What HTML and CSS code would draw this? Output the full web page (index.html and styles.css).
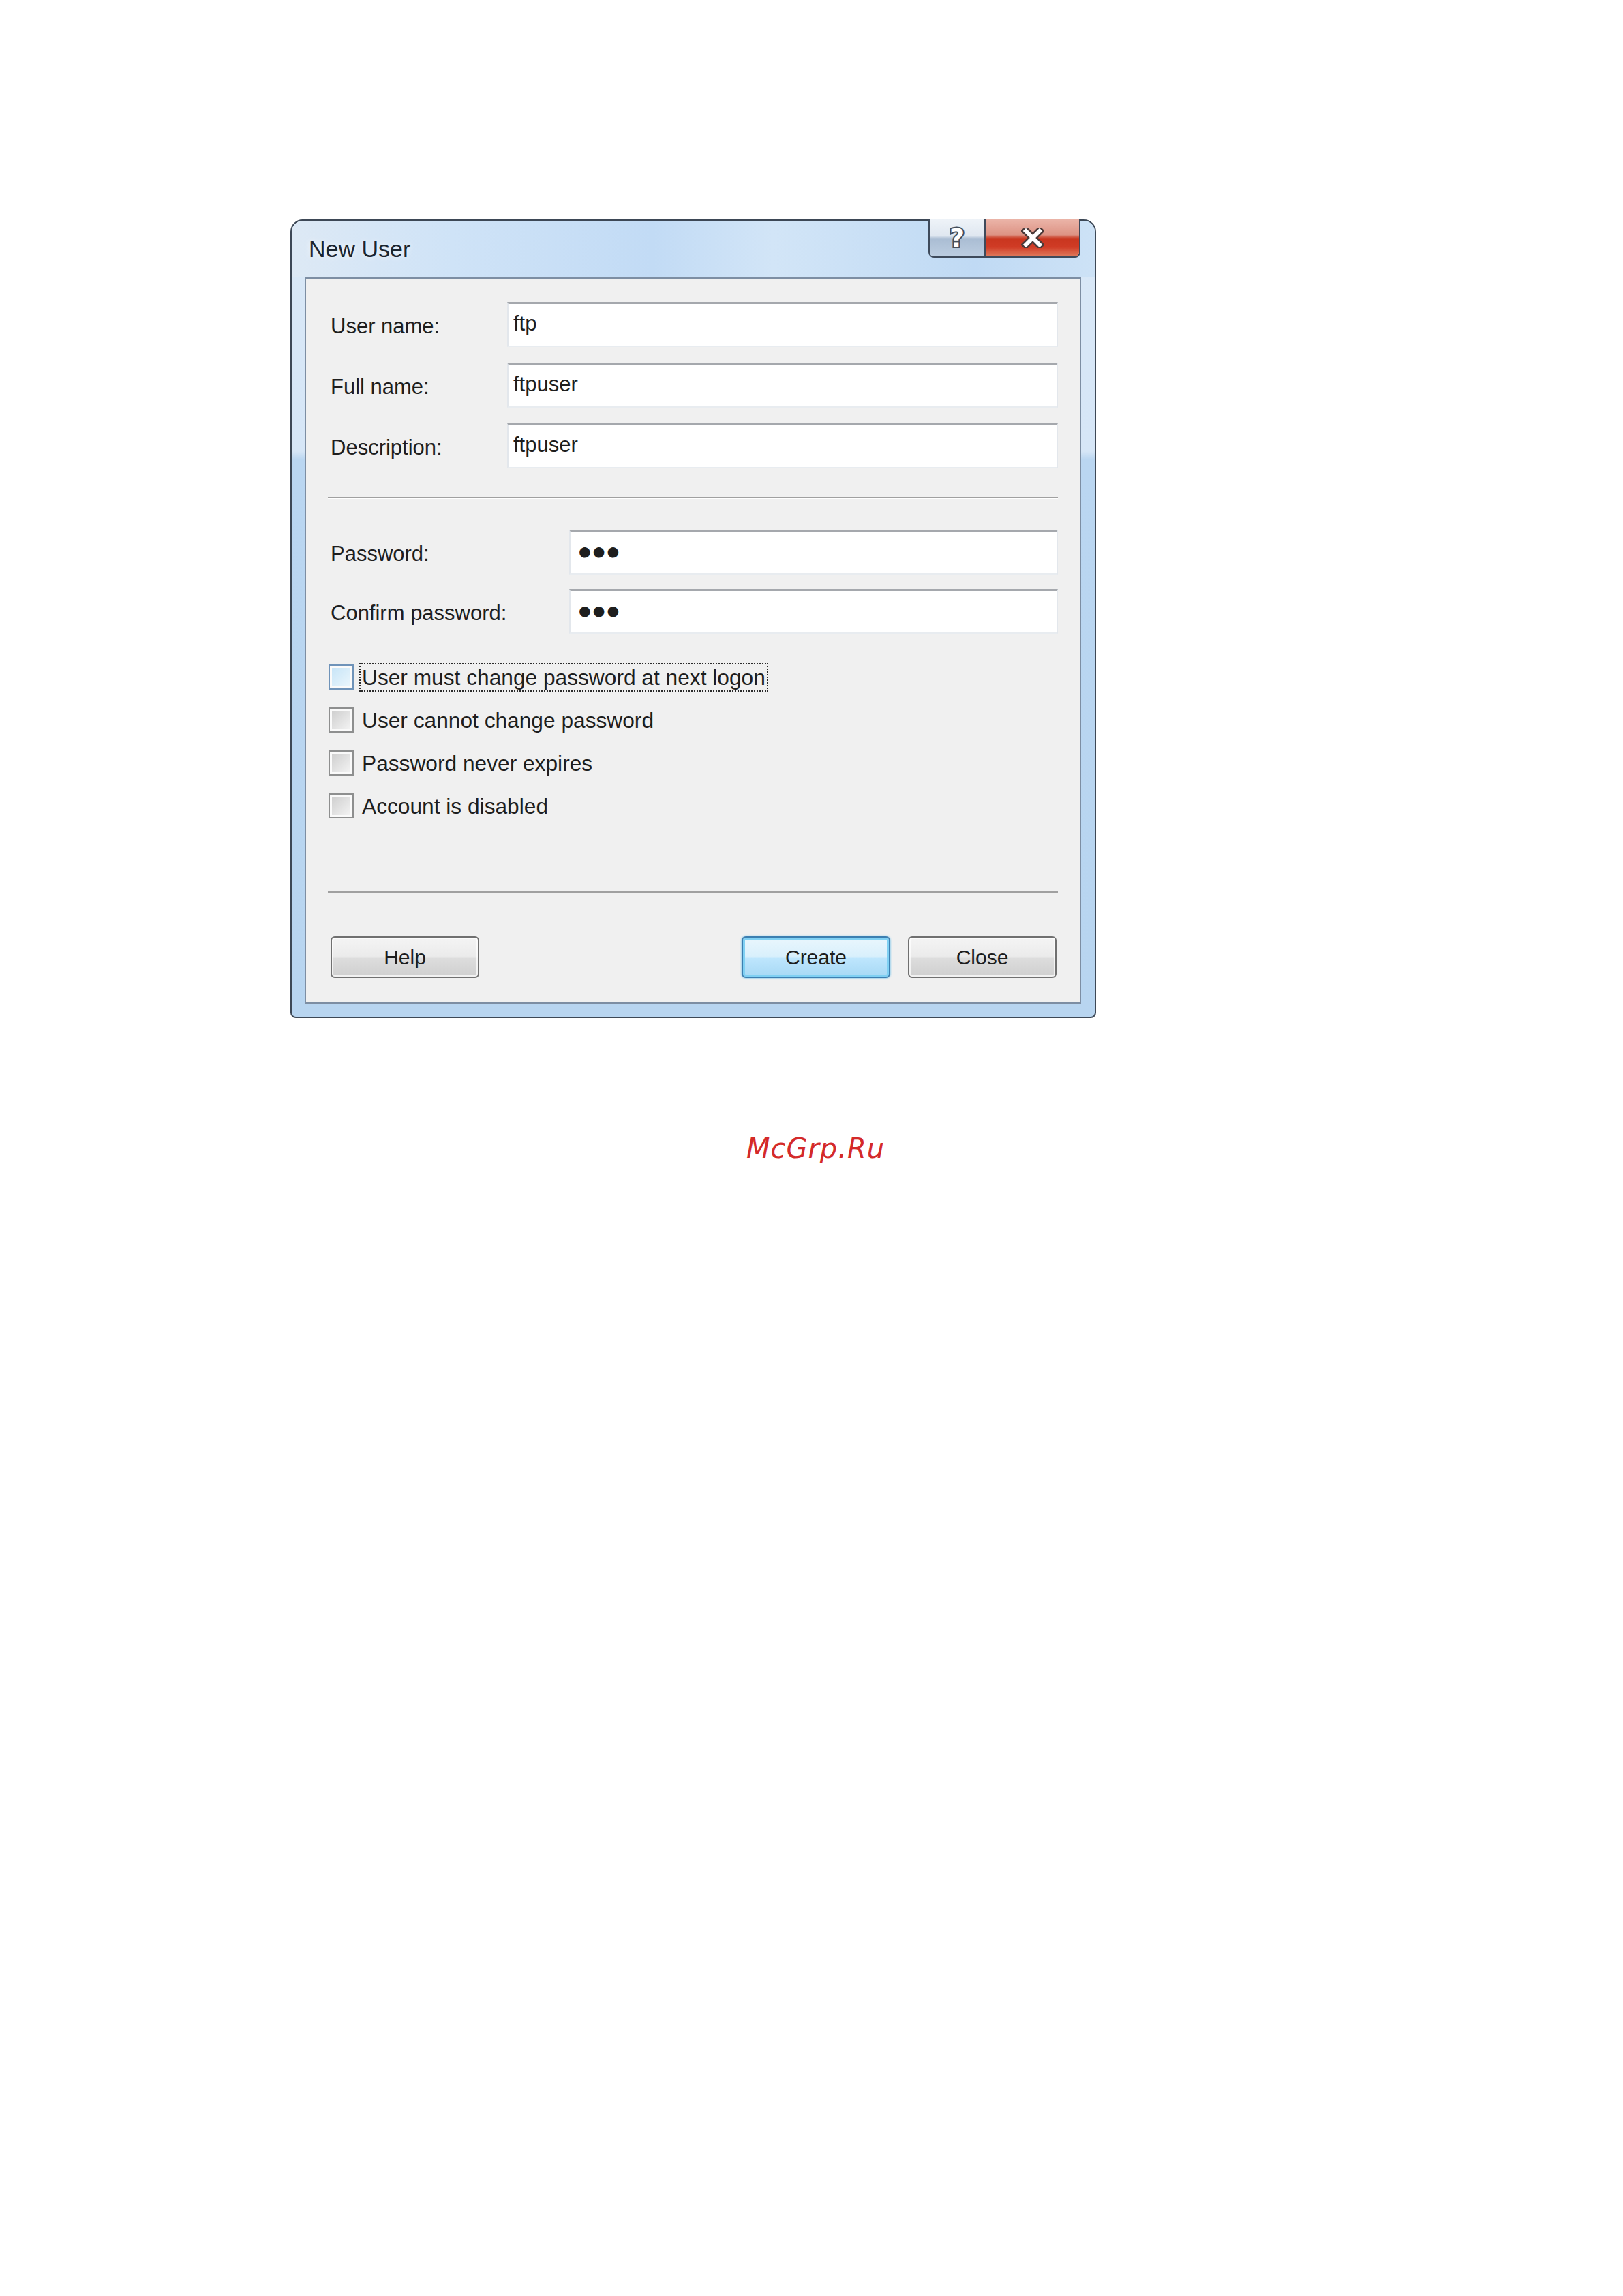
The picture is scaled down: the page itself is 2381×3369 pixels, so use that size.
FILE: index.html
```html
<!DOCTYPE html>
<html lang="en">
<head>
  <meta charset="UTF-8" />
  <title>New User</title>
  <link rel="stylesheet" href="styles.css">
</head>
<body>
  <div class="page">
    <div class="window">
      <div class="titlebar">
        <div class="title">New User</div>
        <div class="caption-btns">
          <div class="cap-btn help-btn"><span>?</span></div>
          <div class="cap-btn close-btn">
            <svg width="34" height="30" viewBox="0 0 34 30">
              <path d="M7 5 L27 25 M27 5 L7 25" stroke="#4d3b3a" stroke-width="11" stroke-linecap="square" fill="none"/>
              <path d="M7 5 L27 25 M27 5 L7 25" stroke="#ffffff" stroke-width="6" stroke-linecap="square" fill="none"/>
            </svg>
          </div>
        </div>
      </div>

      <div class="panel">
        <div class="form-grid account">
          <label>User name:</label><div class="field">ftp</div>
          <label>Full name:</label><div class="field">ftpuser</div>
          <label>Description:</label><div class="field">ftpuser</div>
        </div>

        <div class="sep"></div>

        <div class="form-grid secret">
          <label>Password:</label><div class="field dots">●●●</div>
          <label>Confirm password:</label><div class="field dots">●●●</div>
        </div>

        <div class="checks">
          <div class="check-row focused"><span class="box"></span><span class="check-label">User must change password at next logon</span></div>
          <div class="check-row"><span class="box"></span><span class="check-label">User cannot change password</span></div>
          <div class="check-row"><span class="box"></span><span class="check-label">Password never expires</span></div>
          <div class="check-row"><span class="box"></span><span class="check-label">Account is disabled</span></div>
        </div>

        <div class="sep sep-bottom"></div>

        <div class="buttons">
          <button class="btn">Help</button>
          <div class="spacer"></div>
          <button class="btn default">Create</button>
          <button class="btn">Close</button>
        </div>
      </div>
    </div>
  </div>

  <div class="watermark">McGrp.Ru</div>
</body>
</html>
```

FILE: styles.css
```css
body {
  margin: 0;
  background: #fff;
  font-family: "Liberation Sans", Arial, sans-serif;
  color: #1e1e1e;
}
.page {
  padding: 322px 0 0 426px;
}
.window {
  width: 1182px;
  box-sizing: border-box;
  border: 2px solid #3d4856;
  border-radius: 18px 18px 8px 8px;
  background: linear-gradient(180deg, #d9e8f7 0, #d6e6f7 338px, #bad6f1 350px, #b8d5f0 100%);
}
.titlebar {
  display: flex;
  justify-content: space-between;
  height: 83px;
  border-radius: 16px 16px 0 0;
  background: linear-gradient(90deg, #dde9f5 0, #cfe3f7 20%, #c2dbf5 45%, #d2e5f7 60%, #c0daf4 85%, #cde2f6 100%);
}
.title {
  padding: 21px 0 0 25px;
  font-size: 34px;
  line-height: 40px;
  color: #1b2530;
  text-shadow: 0 0 8px rgba(255,255,255,0.9);
}
.caption-btns {
  display: flex;
  height: 56px;
  box-sizing: border-box;
  margin: -2px 21px 0 0;
  border: 2px solid #3e4a5b;
  border-top: 0;
  border-radius: 0 0 8px 8px;
  overflow: hidden;
}
.cap-btn {
  display: flex;
  align-items: center;
  justify-content: center;
}
.help-btn {
  width: 80px;
  background: linear-gradient(180deg, #eef3f8 0, #dfe7f0 45%, #aabdd3 52%, #bccde0 100%);
}
.help-btn span {
  font-family: "DejaVu Sans", sans-serif;
  font-weight: bold;
  font-size: 38px;
  line-height: 40px;
  color: #fff;
  -webkit-text-stroke: 4px #434d5a;
  paint-order: stroke fill;
}
.close-btn {
  width: 137px;
  border-left: 2px solid #3e4a5b;
  background: linear-gradient(180deg, #ebb4a8 0, #dd9384 42%, #c9361f 52%, #d03b25 75%, #df7a5c 100%);
}
.panel {
  margin: 0 20px 19px 19px;
  border: 2px solid #7d8ea3;
  background: #f0f0f0;
  padding: 34px 32px 36px 36px;
}
.form-grid {
  display: grid;
  grid-auto-rows: 66px;
}
.account {
  grid-template-columns: 259px 1fr;
  row-gap: 23px;
}
.secret {
  grid-template-columns: 350px 1fr;
  row-gap: 21px;
  margin-top: 45px;
}
.form-grid label {
  align-self: start;
  padding-top: 18px;
  font-size: 31px;
  line-height: 36px;
}
.field {
  box-sizing: border-box;
  height: 66px;
  background: #fff;
  border-top: 3px solid #a5a8ad;
  border-left: 2px solid #e3e7ec;
  border-right: 2px solid #e3e7ec;
  border-bottom: 2px solid #e8ecf0;
  padding: 11px 7px 0;
  font-size: 31px;
  line-height: 36px;
}
.dots {
  padding-left: 10px;
  font-size: 36px;
  letter-spacing: -1px;
}
.sep {
  margin: 42px 0 0 -4px;
  border-top: 2px solid #a0a0a0;
  border-bottom: 1px solid #fff;
}
.sep-bottom {
  margin-top: 104px;
}
.checks {
  display: flex;
  flex-direction: column;
  gap: 20px;
  margin-top: 42px;
}
.check-row {
  display: flex;
  align-items: center;
  height: 43px;
  margin-left: -3px;
}
.box {
  width: 37px;
  height: 37px;
  box-sizing: border-box;
  border: 2px solid #8e8f8f;
  background: linear-gradient(135deg, #cbcbcb, #f7f7f7);
  box-shadow: inset 0 0 0 3px #fafafa;
}
.check-label {
  margin-left: 8px;
  padding: 1px 2px;
  border: 2px dotted transparent;
  font-size: 31.7px;
  line-height: 36px;
}
.focused .box {
  border-color: #6f93b9;
  background: linear-gradient(135deg, #c4e3f7, #eef8fd);
}
.focused .check-label {
  border-color: #2a2a2a;
}
.buttons {
  display: flex;
  gap: 26px;
  margin-top: 63px;
  padding-right: 2px;
}
.spacer {
  flex: 1;
}
.btn {
  width: 218px;
  height: 61px;
  border: 2px solid #707070;
  border-radius: 6px;
  background: linear-gradient(180deg, #f4f4f4 0, #ebebeb 48%, #dddddd 52%, #cfcfcf 100%);
  box-shadow: inset 0 0 0 2px rgba(255,255,255,0.7);
  font-family: "Liberation Sans", Arial, sans-serif;
  font-size: 30px;
  color: #1e1e1e;
  padding: 0;
}
.btn.default {
  border-color: #3c7fb1;
  background: linear-gradient(180deg, #e9f6fd 0, #d9f0fc 48%, #bee6fd 52%, #a7d9f5 100%);
  box-shadow: inset 0 0 0 3px #7fd0f3, 0 0 3px #4fb5e8;
}
.watermark {
  margin-top: 167px;
  padding-left: 12px;
  text-align: center;
  font-family: "DejaVu Sans", sans-serif;
  font-style: italic;
  font-size: 40px;
  letter-spacing: 1px;
  line-height: 48px;
  color: #d42a2a;
}
```
